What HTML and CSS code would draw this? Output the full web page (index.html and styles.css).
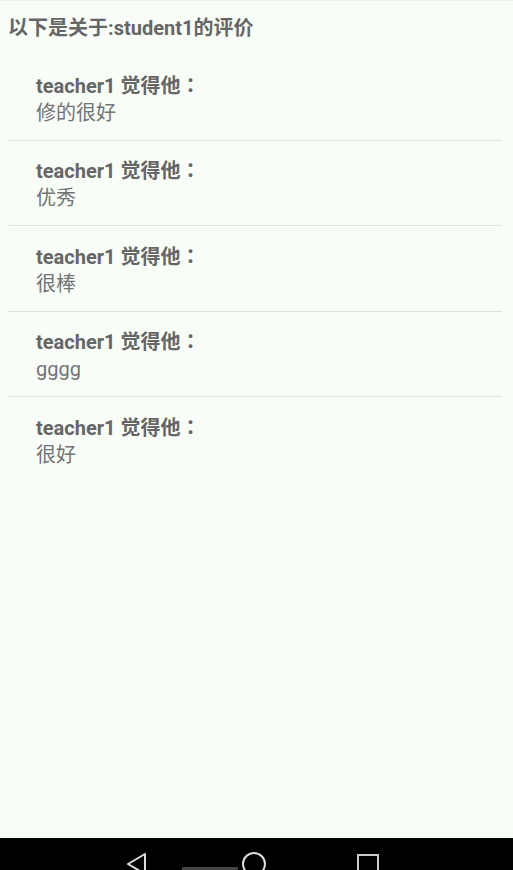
FILE: index.html
```html
<!DOCTYPE html>
<html lang="zh-CN">
<head>
  <meta charset="UTF-8" />
  <meta name="viewport" content="width=device-width, initial-scale=1.0" />
  <title>评价</title>
  <link rel="stylesheet" href="styles.css">
</head>
<body>
  <div class="screen">
    <h1 class="title">以下是关于:student1的评价</h1>

    <ul class="review-list">
      <li class="review"><p class="who">teacher1 觉得他<span class="colon" lang="zh-TW">：</span></p><p class="text">修的很好</p></li>
      <li class="review"><p class="who">teacher1 觉得他<span class="colon" lang="zh-TW">：</span></p><p class="text">优秀</p></li>
      <li class="review"><p class="who">teacher1 觉得他<span class="colon" lang="zh-TW">：</span></p><p class="text">很棒</p></li>
      <li class="review"><p class="who">teacher1 觉得他<span class="colon" lang="zh-TW">：</span></p><p class="text">gggg</p></li>
      <li class="review"><p class="who">teacher1 觉得他<span class="colon" lang="zh-TW">：</span></p><p class="text">很好</p></li>
    </ul>
  </div>

  <!-- Android nav bar -->
  <nav class="navbar">
    <svg class="nav-icon" width="24" height="24" viewBox="0 0 24 24">
      <path d="M20 2 L3 12 L20 22 Z" fill="none" stroke="#ddd" stroke-width="2" stroke-linejoin="round"/>
    </svg>
    <span class="nav-home">
      <span class="handle"></span>
      <svg class="nav-icon" width="26" height="26" viewBox="0 0 26 26">
        <circle cx="13" cy="13" r="11" fill="none" stroke="#ddd" stroke-width="2"/>
      </svg>
    </span>
    <svg class="nav-icon" width="24" height="24" viewBox="0 0 24 24">
      <rect x="2" y="2" width="20" height="20" fill="none" stroke="#ccc" stroke-width="2"/>
    </svg>
  </nav>
</body>
</html>
```

FILE: styles.css
```css
html, body { margin: 0; height: 100%; }
body {
  font-family: Roboto, "Noto Sans CJK SC", sans-serif;
  background: #f8fdf8;
  color: #666;
  display: flex;
  flex-direction: column;
  overflow: hidden;
}
.screen { flex: 1; border-top: 1px solid #eef2ee; }

.title {
  margin: 0;
  padding: 14px 8px 0;
  height: 40px;
  font-size: 20px;
  line-height: 26px;
  font-weight: bold;
  color: #666;
}

.review-list { list-style: none; margin: 0; padding: 0 11px 0 7px; }
.review {
  padding: 15.5px 0 13px 29px;
  border-bottom: 1px solid #dfe2df;
}
.review:last-child { border-bottom: none; }
/* fixed height: mixed Roboto / CJK fallback otherwise grows the line box */
.review p { margin: 0; font-size: 20px; line-height: 28px; height: 28px; }
.who { font-weight: bold; color: #666; }
.colon { font-family: "Noto Sans CJK TC", sans-serif; }
.text { color: #737373; }

.navbar {
  height: 32px;
  flex-shrink: 0;
  background: #000;
  display: flex;
  align-items: flex-start;
  padding-left: 125px;
  overflow: hidden;
}
.nav-icon { display: block; margin-top: 14px; }
.nav-home {
  position: relative;
  display: flex;
  margin-left: 92px;
}
.nav-home .nav-icon { margin-top: 13px; }
.handle {
  position: absolute;
  left: -59px;
  top: 29px;
  width: 56px;
  height: 4px;
  background: #444;
}
.navbar > .nav-icon:last-child { margin-left: 89px; margin-top: 15px; }
```
